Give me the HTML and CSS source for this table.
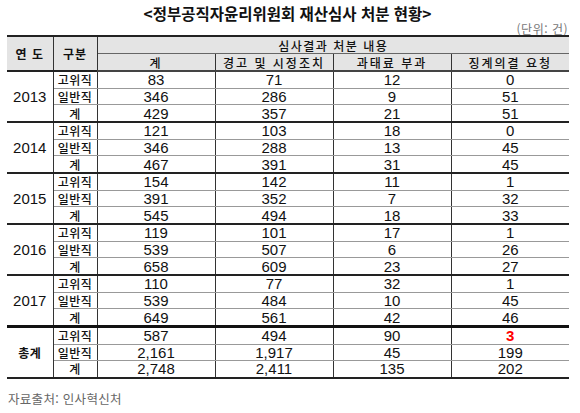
FILE: index.html
```html
<!DOCTYPE html>
<html lang="ko">
  <head>
    <meta charset="UTF-8" />
    <meta name="viewport" content="width=device-width, initial-scale=1.0" />
    <title>정부공직자윤리위원회 재산심사 처분 현황</title>
    <link rel="stylesheet" href="styles.css">
  </head>
  <body>
    <div class="container">
      <h1 class="title">&lt;정부공직자윤리위원회 재산심사 처분 현황&gt;</h1>
      <p class="unit">(단위: 건)</p>

      <table class="stats">
        <colgroup>
          <col class="c-year" />
          <col class="c-kind" />
          <col class="c-num" />
          <col class="c-num" />
          <col class="c-num" />
          <col class="c-num" />
        </colgroup>
        <thead>
          <tr>
            <th rowspan="2" class="year">연 도</th>
            <th rowspan="2" class="kind">구분</th>
            <th colspan="4">심사결과 처분 내용</th>
          </tr>
          <tr class="sub">
            <th>계</th>
            <th>경고 및 시정조치</th>
            <th>과태료 부과</th>
            <th>징계의결 요청</th>
          </tr>
        </thead>
        <tbody>
          <tr class="first">
            <td rowspan="3" class="year">2013</td>
            <td class="kind">고위직</td><td>83</td><td>71</td><td>12</td><td>0</td>
          </tr>
          <tr><td class="kind">일반직</td><td>346</td><td>286</td><td>9</td><td>51</td></tr>
          <tr><td class="kind">계</td><td>429</td><td>357</td><td>21</td><td>51</td></tr>

          <tr class="first">
            <td rowspan="3" class="year">2014</td>
            <td class="kind">고위직</td><td>121</td><td>103</td><td>18</td><td>0</td>
          </tr>
          <tr><td class="kind">일반직</td><td>346</td><td>288</td><td>13</td><td>45</td></tr>
          <tr><td class="kind">계</td><td>467</td><td>391</td><td>31</td><td>45</td></tr>

          <tr class="first">
            <td rowspan="3" class="year">2015</td>
            <td class="kind">고위직</td><td>154</td><td>142</td><td>11</td><td>1</td>
          </tr>
          <tr><td class="kind">일반직</td><td>391</td><td>352</td><td>7</td><td>32</td></tr>
          <tr><td class="kind">계</td><td>545</td><td>494</td><td>18</td><td>33</td></tr>

          <tr class="first">
            <td rowspan="3" class="year">2016</td>
            <td class="kind">고위직</td><td>119</td><td>101</td><td>17</td><td>1</td>
          </tr>
          <tr><td class="kind">일반직</td><td>539</td><td>507</td><td>6</td><td>26</td></tr>
          <tr><td class="kind">계</td><td>658</td><td>609</td><td>23</td><td>27</td></tr>

          <tr class="first">
            <td rowspan="3" class="year">2017</td>
            <td class="kind">고위직</td><td>110</td><td>77</td><td>32</td><td>1</td>
          </tr>
          <tr><td class="kind">일반직</td><td>539</td><td>484</td><td>10</td><td>45</td></tr>
          <tr><td class="kind">계</td><td>649</td><td>561</td><td>42</td><td>46</td></tr>

          <tr class="first total">
            <td rowspan="3" class="year label">총계</td>
            <td class="kind">고위직</td><td>587</td><td>494</td><td>90</td><td class="hl">3</td>
          </tr>
          <tr><td class="kind">일반직</td><td>2,161</td><td>1,917</td><td>45</td><td>199</td></tr>
          <tr><td class="kind">계</td><td>2,748</td><td>2,411</td><td>135</td><td>202</td></tr>
        </tbody>
      </table>

      <p class="source">자료출처: 인사혁신처</p>
    </div>
  </body>
</html>
```

FILE: styles.css
```css
body {
  margin: 0;
  background-color: #fff;
  color: #111;
  font-family: "Liberation Sans", "Noto Sans CJK KR", sans-serif;
}
.container {
  width: 561px;
  padding: 3px 0 0 7px;
}
.title {
  margin: 0;
  font-family: "Noto Sans CJK KR", sans-serif;
  font-size: 15.5px;
  font-weight: 700;
  line-height: 20px;
  text-align: center;
  color: #111;
}
.unit {
  margin: 0;
  height: 12px;
  font-family: "Noto Sans CJK KR", sans-serif;
  font-size: 12px;
  line-height: 12px;
  letter-spacing: 0.5px;
  text-align: right;
  color: #777;
}
.stats {
  width: 561px;
  border-collapse: collapse;
  table-layout: fixed;
  border-top: 2px solid #222;
  border-bottom: 2px solid #222;
}
.c-year {
  width: 46px;
}
.c-kind {
  width: 44px;
}
.c-num {
  width: 118px;
}
.stats th,
.stats td {
  padding: 0;
  height: 15.67px;
  line-height: 15px;
  text-align: center;
  white-space: nowrap;
  overflow: hidden;
  border: 1px solid #333;
  border-top-color: #999;
  border-bottom-color: #999;
}
.stats tr > :first-child {
  border-left: none;
}
.stats tr > :last-child {
  border-right: none;
}
.stats th {
  height: 16px;
  background-color: #e4e4e4;
  font-family: "Noto Sans CJK KR", sans-serif;
  font-size: 12px;
  font-weight: 500;
  letter-spacing: 1.5px;
  border-top-color: #333;
  border-bottom-color: #666;
}
.stats th.year,
.stats th.kind {
  font-weight: 700;
  letter-spacing: 1px;
}
.stats thead tr.sub th {
  letter-spacing: 2px;
  border-bottom: 2px solid #444;
}
.stats td {
  font-size: 15px;
}
.stats td.kind,
.stats td.label {
  font-family: "Noto Sans CJK KR", sans-serif;
  font-size: 12px;
  font-weight: 500;
  letter-spacing: 0.5px;
}
.stats td.label {
  font-weight: 700;
}
.stats td.year {
  border-bottom-color: #222;
}
.stats tr.first td {
  border-top: 2px solid #222;
}
.stats tr.total td {
  border-top: 3px solid #111;
}
.stats td.hl {
  color: #f00;
  font-weight: 700;
}
.source {
  margin: 10px 0 0 1px;
  font-family: "Noto Sans CJK KR", sans-serif;
  font-size: 12.5px;
  letter-spacing: 0.3px;
  color: #666;
}
```
